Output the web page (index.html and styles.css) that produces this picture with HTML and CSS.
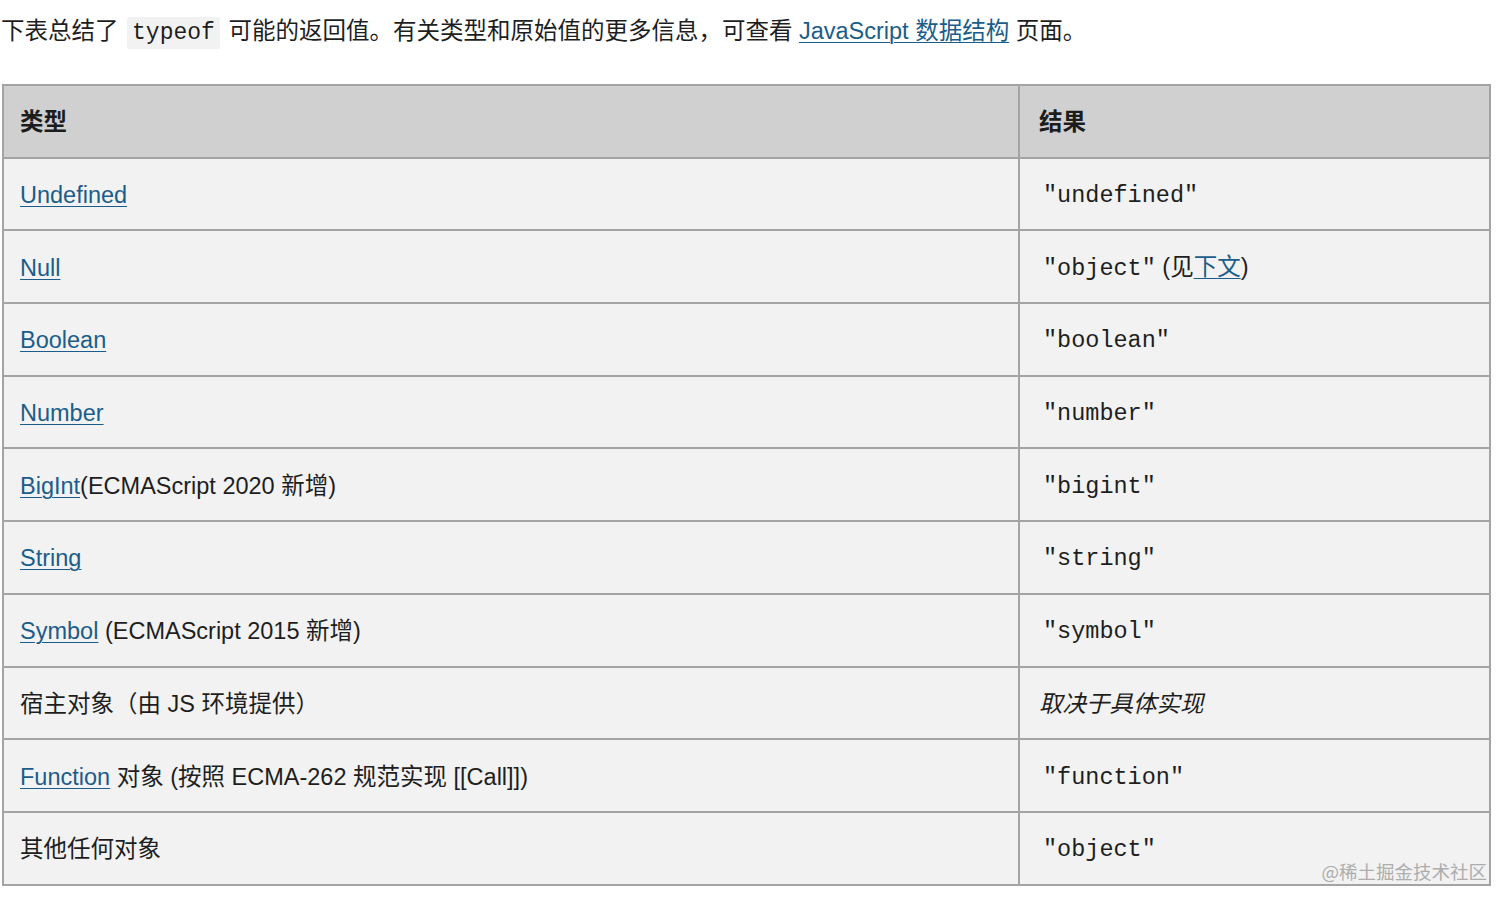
FILE: index.html
```html
<!DOCTYPE html>
<html lang="zh-CN">
<head>
<meta charset="utf-8">
<title>typeof</title>
<link rel="stylesheet" href="styles.css">
</head>
<body>
<p class="intro">下表总结了 <code class="code">typeof</code> 可能的返回值。有关类型和原始值的更多信息，可查看 <a class="link" href="#">JavaScript 数据结构</a> 页面。</p>
<div class="wrap">
<table class="tbl">
<colgroup><col class="c1"><col class="c2"></colgroup>
<thead>
<tr><th>类型</th><th class="r">结果</th></tr>
</thead>
<tbody>
<tr><td><a class="link" href="#">Undefined</a></td><td class="r"><span class="mono">"undefined"</span></td></tr>
<tr><td><a class="link" href="#">Null</a></td><td class="r"><span class="mono">"object"</span> (见<a class="link" href="#">下文</a>)</td></tr>
<tr><td><a class="link" href="#">Boolean</a></td><td class="r"><span class="mono">"boolean"</span></td></tr>
<tr><td><a class="link" href="#">Number</a></td><td class="r"><span class="mono">"number"</span></td></tr>
<tr><td><a class="link" href="#">BigInt</a>(ECMAScript 2020 新增)</td><td class="r"><span class="mono">"bigint"</span></td></tr>
<tr><td><a class="link" href="#">String</a></td><td class="r"><span class="mono">"string"</span></td></tr>
<tr><td><a class="link" href="#">Symbol</a> (ECMAScript 2015 新增)</td><td class="r"><span class="mono">"symbol"</span></td></tr>
<tr><td>宿主对象（由 JS 环境提供）</td><td class="r"><em class="em">取决于具体实现</em></td></tr>
<tr><td><a class="link" href="#">Function</a> 对象 (按照 ECMA-262 规范实现 [[Call]])</td><td class="r"><span class="mono">"function"</span></td></tr>
<tr><td>其他任何对象</td><td class="r"><span class="mono">"object"</span></td></tr>
</tbody>
</table>
<div class="watermark">@稀土掘金技术社区</div>
</div>
</body>
</html>
```

FILE: styles.css
```css
html, body {
  margin: 0;
  padding: 0;
  background: #ffffff;
}
body {
  font-family: "Liberation Sans", Arial, "Noto Sans CJK SC", sans-serif;
  font-size: 23.5px;
  color: #1e1e1e;
}
.intro {
  margin: 0;
  padding: 14px 0 0 1px;
  line-height: 34px;
  height: 71px;
  box-sizing: border-box;
}
.code {
  font-family: "Liberation Mono", "Courier New", monospace;
  font-size: 23px;
  background: #f2f2f2;
  padding: 3px 5px;
  margin: 0 2px;
  border-radius: 2px;
}
.link {
  color: #1b5d8a;
  text-decoration: underline;
  text-underline-offset: 3px;
  text-decoration-thickness: 1px;
}
.wrap {
  position: relative;
  margin: 13px 0 0 2px;
  width: 1487px;
}
.tbl {
  border-collapse: collapse;
  width: 1487px;
  table-layout: fixed;
  border: 2px solid #a4a4a4;
}
.c1 { width: 1016px; }
.c2 { width: 471px; }
.tbl tr {
  height: 72.7px;
}
.tbl th, .tbl td {
  border: 2px solid #a4a4a4;
  padding: 2px 18px 0 16px;
  line-height: 32px;
  text-align: left;
  vertical-align: middle;
  white-space: nowrap;
}
.tbl th {
  background: #d0d0d0;
  font-weight: bold;
  color: #1c1c1c;
}
.tbl td {
  background: #f2f2f2;
}
.tbl .r {
  padding-left: 19px;
}
.mono {
  font-family: "Liberation Mono", "Courier New", monospace;
  font-size: 23.5px;
  padding-left: 4px;
}
.em {
  font-style: italic;
}
.watermark {
  position: absolute;
  right: 2px;
  bottom: 4px;
  font-family: "Noto Sans CJK SC", sans-serif;
  font-size: 18.5px;
  line-height: 22px;
  color: #adadad;
}
```
